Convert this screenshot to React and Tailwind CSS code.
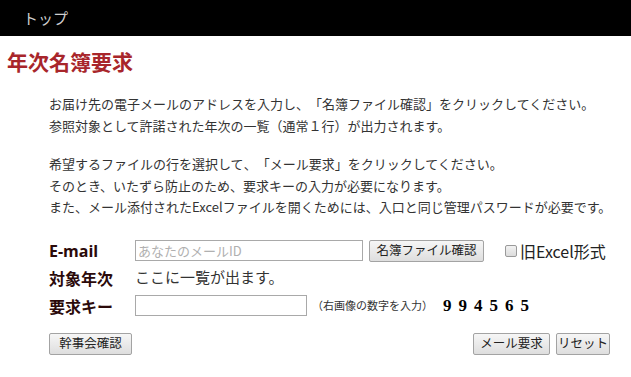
import React from "react";

const jp = { fontFamily: '"Noto Sans CJK JP", "Noto Sans", sans-serif' };

function Btn({ children, className = "" }) {
  return (
    <button
      className={`h-[22px] px-0 whitespace-nowrap flex items-center justify-center border border-[#a3a3a3] rounded-[2px] bg-gradient-to-b from-[#f6f6f6] to-[#dedede] text-[12.5px] leading-none text-[#222] ${className}`}
      style={jp}
    >
      {children}
    </button>
  );
}

function Comma() {
  return <span className="inline-block w-[1em]">、</span>;
}

export default function App() {
  return (
    <div className="w-[631px] h-[377px] bg-white overflow-hidden [text-spacing-trim:space-all]" style={jp}>
      <div className="h-[36px] bg-black flex items-center pl-[23px]">
        <span className="text-[15px] text-[#cfcfcf]">トップ</span>
      </div>
      <h1 className="mt-[11px] ml-[7px] text-[21px] leading-[28px] font-bold text-[#a8262b]">
        年次名簿要求
      </h1>
      <div className="pl-[49px] pt-[18px] text-[13px] leading-[21.5px] text-[#333]">
        <p>お届け先の電子メールのアドレスを入力し<Comma />「名簿ファイル確認」をクリックしてください。</p>
        <p>参照対象として許諾された年次の一覧（通常１行）が出力されます。</p>
        <p className="mt-[17px]">希望するファイルの行を選択して<Comma />「メール要求」をクリックしてください。</p>
        <p>そのとき、いたずら防止のため、要求キーの入力が必要になります。</p>
        <p>また、メール添付されたExcelファイルを開くためには、入口と同じ管理パスワードが必要です。</p>
      </div>
      <div className="pl-[49px] pr-[21px] mt-[22px]">
        <div className="flex items-center h-[22px]">
          <span className="w-[86px] text-[16px] font-bold text-[#2b0a0a]" style={{ fontFamily: '"Open Sans", "Noto Sans", sans-serif' }}>E-mail</span>
          <input
            className="w-[228px] h-[21px] border border-[#a9a9a9] px-[2px] text-[13px] placeholder:text-[#b0b0b0] outline-none"
            placeholder="あなたのメールID"
            style={jp}
          />
          <Btn className="ml-[6px] w-[115px]">名簿ファイル確認</Btn>
          <span className="ml-[21px] w-[12px] h-[12px] border border-[#9a9a9a] rounded-[2px] bg-gradient-to-b from-[#f2f2f2] to-[#dcdcdc]"></span>
          <span className="ml-[3px] text-[16px] text-[#222]">旧Excel形式</span>
        </div>
        <div className="flex items-center h-[22px] mt-[5px]">
          <span className="w-[86px] text-[16px] font-bold text-[#2b0a0a]">対象年次</span>
          <span className="text-[15px] text-[#333]">ここに一覧が出ます。</span>
        </div>
        <div className="flex items-center h-[22px] mt-[6px]">
          <span className="w-[86px] text-[16px] font-bold text-[#2b0a0a]">要求キー</span>
          <input className="w-[172px] h-[21px] border border-[#a9a9a9] outline-none" />
          <span className="ml-[5px] text-[11px] text-[#333]">（右画像の数字を入力）</span>
          <span
            className="ml-[10px] text-[17px] font-black text-black tracking-[7px]"
            style={{ fontFamily: '"Liberation Serif", serif' }}
          >
            994565
          </span>
        </div>
        <div className="flex items-center justify-between mt-[16px]">
          <Btn className="w-[83px]">幹事会確認</Btn>
          <div className="flex gap-[6px]">
            <Btn className="w-[77px]">メール要求</Btn>
            <Btn className="w-[54px]">リセット</Btn>
          </div>
        </div>
      </div>
    </div>
  );
}
